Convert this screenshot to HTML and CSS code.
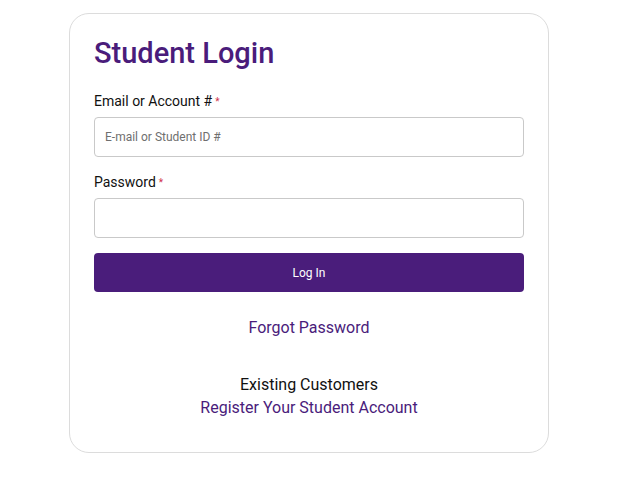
FILE: index.html
```html
<!DOCTYPE html>
<html lang="en">
<head>
<meta charset="utf-8">
<title>Student Login</title>
<link rel="stylesheet" href="styles.css">
</head>
<body>
<div class="page">
  <div class="card">
    <h1 class="title">Student Login</h1>
    <form class="form">
      <div class="field">
        <label class="label" for="email">Email or Account #<span class="req">*</span></label>
        <input class="input" id="email" type="text" placeholder="E-mail or Student ID #">
      </div>
      <div class="field field-pw">
        <label class="label" for="pw">Password<span class="req">*</span></label>
        <input class="input" id="pw" type="password">
      </div>
      <button class="btn" type="button">Log In</button>
    </form>
    <div class="forgot"><a class="link" href="#">Forgot Password</a></div>
    <div class="existing">
      <div class="existing-title">Existing Customers</div>
      <a class="link" href="#">Register Your Student Account</a>
    </div>
  </div>
</div>
</body>
</html>
```
FILE: styles.css
```css
html, body {
  margin: 0;
  padding: 0;
  background: #fff;
}
body {
  font-family: Roboto, "Liberation Sans", Arial, sans-serif;
  color: #111;
}
.page {
  padding: 13px 0 0 69px;
}
.card {
  box-sizing: border-box;
  width: 480px;
  border: 1px solid #dcdcdc;
  border-radius: 20px;
  padding: 23px 24px 33px 24px;
  background: #fff;
}
.title {
  margin: 0;
  font-size: 29px;
  line-height: 33px;
  font-weight: 500;
  color: #4a1c7b;
}
.form {
  margin: 23px 0 0 0;
  display: flex;
  flex-direction: column;
}
.field {
  display: flex;
  flex-direction: column;
}
.field-pw {
  margin-top: 17px;
}
.label {
  font-size: 14px;
  line-height: 16px;
  color: #111;
  margin-bottom: 7px;
}
.req {
  color: #d0304a;
  font-size: 10px;
  margin-left: 3px;
  vertical-align: 1px;
}
.input {
  box-sizing: border-box;
  height: 40px;
  width: 100%;
  border: 1px solid #c9c9c9;
  border-radius: 4px;
  padding: 0 10px;
  font-family: Roboto, "Liberation Sans", Arial, sans-serif;
  font-size: 12px;
  color: #333;
  background: #fff;
  outline: none;
}
.input::placeholder {
  color: #6f6f6f;
}
.btn {
  margin-top: 15px;
  height: 39px;
  width: 100%;
  border: none;
  border-radius: 4px;
  background: #4a1d7b;
  color: #fff;
  font-family: Roboto, "Liberation Sans", Arial, sans-serif;
  font-size: 12px;
  font-weight: 400;
  cursor: pointer;
}
.forgot {
  margin-top: 24px;
  text-align: center;
  font-size: 16px;
  line-height: 23px;
}
.link {
  color: #4a1c7b;
  text-decoration: none;
  font-size: 16px;
}
.existing {
  margin-top: 34px;
  text-align: center;
  font-size: 16px;
  line-height: 23px;
  display: flex;
  flex-direction: column;
  align-items: center;
}
.existing-title {
  color: #111;
}
```
